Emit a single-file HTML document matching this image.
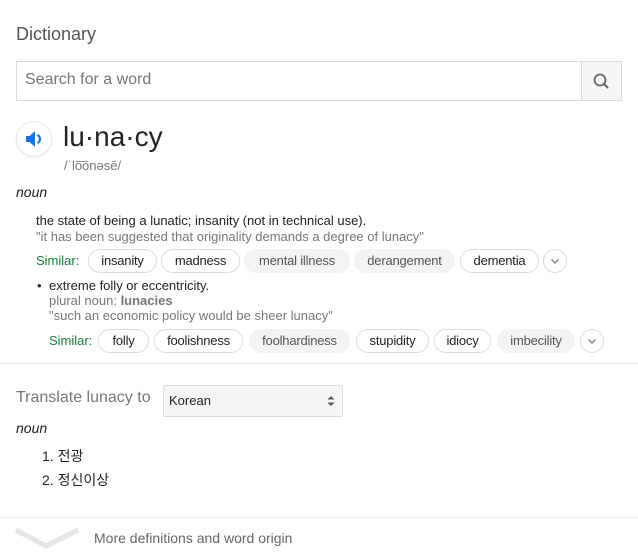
<!DOCTYPE html>
<html><head><meta charset="utf-8"><style>
*{margin:0;padding:0;box-sizing:border-box}
body{width:638px;height:558px;background:#fff;font-family:"Liberation Sans",Arial,sans-serif;color:#222;position:relative;overflow:hidden}
.a{position:absolute;white-space:nowrap}
.chip{position:absolute;height:24px;border:1px solid #dadce0;border-radius:12px;font-size:13px;line-height:22px;text-align:center;color:#222;letter-spacing:-0.2px}
.g{background:#f1f3f4;border-color:#f1f3f4;color:#555}
.chev{position:absolute;width:24px;height:24px;border:1px solid #dadce0;border-radius:12px}
.gray{color:#777}
</style></head><body>
<div class="a" style="left:16px;top:24px;font-size:18px;color:#555">Dictionary</div>
<div class="a" style="left:16px;top:61px;width:606px;height:40px;border:1px solid #d9d9d9"></div>
<div class="a" style="left:25px;top:71px;font-size:16px;color:#777">Search for a word</div>
<div class="a" style="left:581px;top:61px;width:41px;height:40px;background:#f5f5f5;border:1px solid #d9d9d9">
<svg width="39" height="38" viewBox="0 0 39 38"><circle cx="18" cy="18" r="5.5" fill="none" stroke="#666" stroke-width="1.8"/><line x1="22" y1="22" x2="26" y2="26" stroke="#666" stroke-width="2"/></svg></div>
<div class="a" style="left:16px;top:121px;width:36px;height:36px;border-radius:18px;border:1px solid #e8e8e8;box-shadow:0 1px 2px rgba(0,0,0,.08)">
<svg width="34" height="34" viewBox="0 0 34 34"><path d="M9 14h3.5l5.5-5v16l-5.5-5H9z" fill="#1a73e8"/><path d="M20.5 13a4.5 4.5 0 0 1 0 8" fill="none" stroke="#1a73e8" stroke-width="2.2"/></svg></div>
<div class="a" style="left:63px;top:121px;font-size:28px;color:#222">lu·na·cy</div>
<div class="a" style="left:64px;top:158px;font-size:13px;color:#777">/ˈlo͞onəsē/</div>
<div class="a" style="left:16px;top:184px;font-size:14px;font-style:italic">noun</div>
<div class="a" style="left:36px;top:213px;font-size:13px">the state of being a lunatic; insanity (not in technical use).</div>
<div class="a gray" style="left:36px;top:229px;font-size:13px">"it has been suggested that originality demands a degree of lunacy"</div>
<div class="a" style="left:36px;top:253px;font-size:13px;color:#188038">Similar:</div>
<div class="chip" style="left:88px;top:249px;width:69px">insanity</div>
<div class="chip" style="left:161px;top:249px;width:79px">madness</div>
<div class="chip g" style="left:244px;top:249px;width:106px">mental illness</div>
<div class="chip g" style="left:354px;top:249px;width:101px">derangement</div>
<div class="chip" style="left:460px;top:249px;width:79px">dementia</div>
<div class="chev" style="left:543px;top:249px"><svg width="22" height="22"><path d="M7.5 9.5l3.5 3.5 3.5-3.5" fill="none" stroke="#888" stroke-width="1.5"/></svg></div>
<div class="a" style="left:37px;top:278px;font-size:13px">•</div>
<div class="a" style="left:49px;top:278px;font-size:13px">extreme folly or eccentricity.</div>
<div class="a gray" style="left:49px;top:293px;font-size:13px">plural noun: <b>lunacies</b></div>
<div class="a gray" style="left:49px;top:308px;font-size:13px">"such an economic policy would be sheer lunacy"</div>
<div class="a" style="left:49px;top:333px;font-size:13px;color:#188038">Similar:</div>
<div class="chip" style="left:98px;top:329px;width:51px">folly</div>
<div class="chip" style="left:154px;top:329px;width:89px">foolishness</div>
<div class="chip g" style="left:249px;top:329px;width:101px">foolhardiness</div>
<div class="chip" style="left:356px;top:329px;width:73px">stupidity</div>
<div class="chip" style="left:434px;top:329px;width:57px">idiocy</div>
<div class="chip g" style="left:497px;top:329px;width:78px">imbecility</div>
<div class="chev" style="left:580px;top:329px"><svg width="22" height="22"><path d="M7.5 9.5l3.5 3.5 3.5-3.5" fill="none" stroke="#888" stroke-width="1.5"/></svg></div>
<div class="a" style="left:0;top:363px;width:638px;height:1px;background:#ebebeb"></div>
<div class="a" style="left:16px;top:389px;font-size:16px;color:#777">Translate lunacy to</div>
<div class="a" style="left:163px;top:385px;width:180px;height:32px;background:#f5f5f5;border:1px solid #dcdcdc;border-radius:2px"></div>
<div class="a" style="left:169px;top:393px;font-size:13px">Korean</div>
<svg class="a" style="left:326px;top:393px" width="10" height="16"><path d="M1.5 6.5L5 3l3.5 3.5zM1.5 9.5L5 13l3.5-3.5z" fill="#555"/></svg>
<div class="a" style="left:16px;top:420px;font-size:14px;font-style:italic">noun</div>
<div class="a" style="left:42px;top:446px;font-size:14px;font-family:'Liberation Sans','Noto Sans CJK KR',sans-serif">1. 전광</div>
<div class="a" style="left:42px;top:470px;font-size:14px;font-family:'Liberation Sans','Noto Sans CJK KR',sans-serif">2. 정신이상</div>
<div class="a" style="left:0;top:517px;width:638px;height:1px;background:#ebebeb"></div>
<svg class="a" style="left:14px;top:526px" width="66" height="26"><path d="M2 4l30 16 32-16" fill="none" stroke="#e6e6e6" stroke-width="5"/></svg>
<div class="a" style="left:94px;top:530px;font-size:14px;color:#666">More definitions and word origin</div>
</body></html>
